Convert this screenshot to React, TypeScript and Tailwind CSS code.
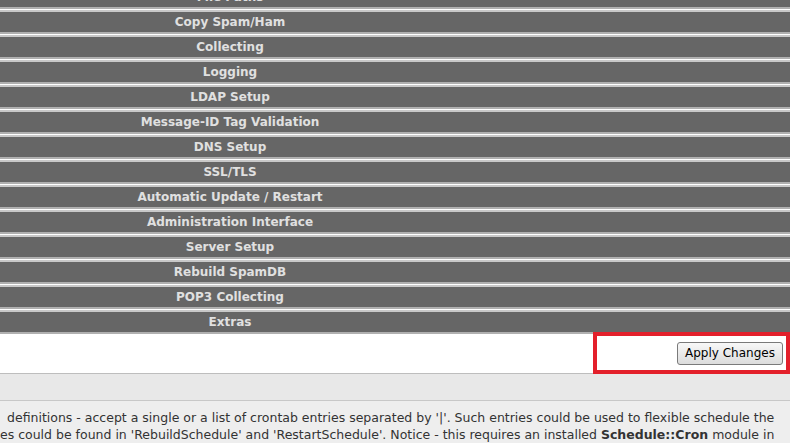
const sections = [
  'File Paths',
  'Copy Spam/Ham',
  'Collecting',
  'Logging',
  'LDAP Setup',
  'Message-ID Tag Validation',
  'DNS Setup',
  'SSL/TLS',
  'Automatic Update / Restart',
  'Administration Interface',
  'Server Setup',
  'Rebuild SpamDB',
  'POP3 Collecting',
  'Extras',
];

function SectionBar({ title }: { title: string }) {
  return (
    <div className="border-t-2 border-[#c8c8c8] border-b-2 border-b-[#b0b0b0] mb-px">
      <div className="h-5 bg-[#666666] flex items-center">
        <div className="w-[460px] text-center text-[12px] font-bold leading-5 text-[#e0e0e0]">{title}</div>
      </div>
    </div>
  );
}

export default function App() {
  return (
    <div className="w-[790px] h-[445px] overflow-hidden bg-white" style={{ fontFamily: '"DejaVu Sans", Verdana, sans-serif' }}>
      <div className="-mt-[15px]">
        {sections.map((s) => (
          <SectionBar key={s} title={s} />
        ))}
      </div>

      {/* apply row */}
      <div className="-mt-px h-[40px] bg-white border-b border-[#bdbdbd] flex justify-end">
        <div className="w-[197px] h-[42px] -mt-[2px] border-4 border-[#e3202b] flex items-center justify-end pr-[3px]">
          <button className="h-[23px] w-[106px] rounded-[3px] border border-[#7a7a7a] bg-gradient-to-b from-[#f8f8f8] to-[#dcdcdc] text-[12px] text-black leading-none">
            Apply Changes
          </button>
        </div>
      </div>

      <div className="h-[27px] bg-[#e8e8e8] border-b border-[#c8c8c8]" />

      <div className="bg-[#eeeeee] pt-[8px] text-[12.5px] leading-[17px] text-[#333]">
        <div className="whitespace-nowrap pl-[7px]">
          definitions - accept a single or a list of crontab entries separated by '|'. Such entries could be used to flexible schedule the
        </div>
        <div className="whitespace-nowrap">
          es could be found in 'RebuildSchedule' and 'RestartSchedule'. Notice - this requires an installed <b>Schedule::Cron</b> module in
        </div>
      </div>
    </div>
  );
}
